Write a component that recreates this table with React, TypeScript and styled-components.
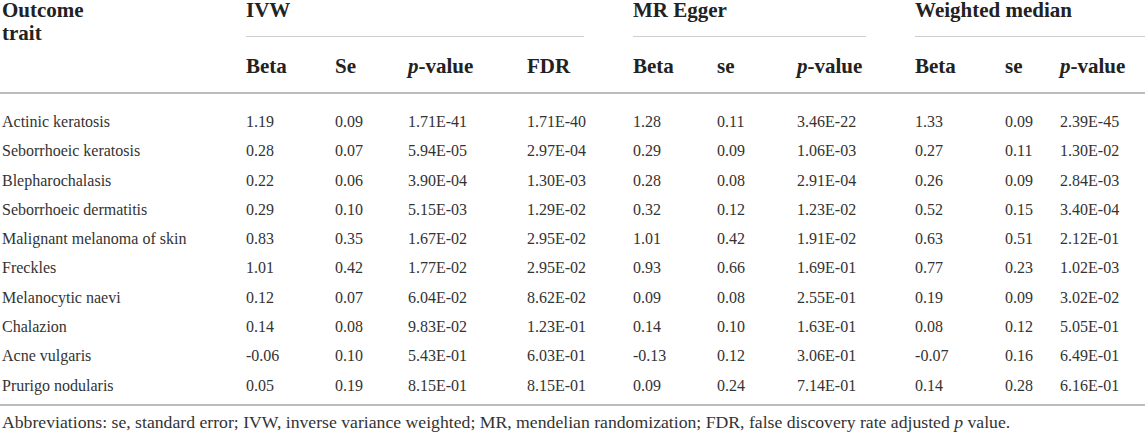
import React from "react";
import styled, { createGlobalStyle } from "styled-components";

const serif = `"Liberation Serif", "Times New Roman", serif`;

const GlobalStyle = createGlobalStyle`
  html, body {
    margin: 0;
    padding: 0;
    background: #fff;
  }
  body {
    font-family: ${serif};
    color: #333;
  }
`;

interface Row {
  trait: string;
  values: string[];
}

const rows: Row[] = [
  { trait: "Actinic keratosis", values: ["1.19", "0.09", "1.71E-41", "1.71E-40", "1.28", "0.11", "3.46E-22", "1.33", "0.09", "2.39E-45"] },
  { trait: "Seborrhoeic keratosis", values: ["0.28", "0.07", "5.94E-05", "2.97E-04", "0.29", "0.09", "1.06E-03", "0.27", "0.11", "1.30E-02"] },
  { trait: "Blepharochalasis", values: ["0.22", "0.06", "3.90E-04", "1.30E-03", "0.28", "0.08", "2.91E-04", "0.26", "0.09", "2.84E-03"] },
  { trait: "Seborrhoeic dermatitis", values: ["0.29", "0.10", "5.15E-03", "1.29E-02", "0.32", "0.12", "1.23E-02", "0.52", "0.15", "3.40E-04"] },
  { trait: "Malignant melanoma of skin", values: ["0.83", "0.35", "1.67E-02", "2.95E-02", "1.01", "0.42", "1.91E-02", "0.63", "0.51", "2.12E-01"] },
  { trait: "Freckles", values: ["1.01", "0.42", "1.77E-02", "2.95E-02", "0.93", "0.66", "1.69E-01", "0.77", "0.23", "1.02E-03"] },
  { trait: "Melanocytic naevi", values: ["0.12", "0.07", "6.04E-02", "8.62E-02", "0.09", "0.08", "2.55E-01", "0.19", "0.09", "3.02E-02"] },
  { trait: "Chalazion", values: ["0.14", "0.08", "9.83E-02", "1.23E-01", "0.14", "0.10", "1.63E-01", "0.08", "0.12", "5.05E-01"] },
  { trait: "Acne vulgaris", values: ["-0.06", "0.10", "5.43E-01", "6.03E-01", "-0.13", "0.12", "3.06E-01", "-0.07", "0.16", "6.49E-01"] },
  { trait: "Prurigo nodularis", values: ["0.05", "0.19", "8.15E-01", "8.15E-01", "0.09", "0.24", "7.14E-01", "0.14", "0.28", "6.16E-01"] },
];

const colWidths = [244, 89, 73, 119, 106, 84, 80, 118, 90, 55, 87];

const Wrapper = styled.div`
  width: 1145px;
  font-family: ${serif};
`;

const Table = styled.table`
  width: 1145px;
  table-layout: fixed;
  border-collapse: separate;
  border-spacing: 0;
  font-family: ${serif};
`;

const HeadCell = styled.th<{ $rule?: boolean }>`
  padding: 0 0 0 2px;
  text-align: left;
  vertical-align: top;
  font-family: ${serif};
  font-weight: 700;
  font-size: 21px;
  line-height: 20px;
  color: #222;
  white-space: nowrap;
  border-bottom: ${({ $rule }) => ($rule ? "2px solid #bcbcbc" : "none")};
`;

const TraitLabel = styled.div`
  line-height: 23.4px;
  margin-top: -1px;
`;

const SubHead = styled(HeadCell)`
  padding-top: 19px;
  padding-bottom: 16px;
`;

const GroupTitle = styled.div<{ $last?: boolean }>`
  padding-bottom: 16px;
  margin-right: ${({ $last }) => ($last ? "0" : "47px")};
  border-bottom: 1px solid #cfcfcf;
`;

const BodyRow = styled.tr<{ $first?: boolean; $last?: boolean }>`
  & > td {
    padding-top: ${({ $first }) => ($first ? "13px" : "0")};
    padding-bottom: ${({ $last }) => ($last ? "4px" : "0")};
    border-bottom: ${({ $last }) => ($last ? "2px solid #bcbcbc" : "none")};
  }
`;

const Cell = styled.td`
  padding-left: 2px;
  font-family: ${serif};
  font-size: 16px;
  line-height: 29.3px;
  color: #333;
  white-space: nowrap;
  vertical-align: top;
`;

const Footnote = styled.p`
  margin: 0;
  padding: 6px 0 0 2px;
  font-family: ${serif};
  font-size: 17.7px;
  line-height: 20px;
  color: #333;
  white-space: nowrap;
`;

const PValue = () => (
  <>
    <i>p</i>-value
  </>
);

export default function App() {
  return (
    <Wrapper>
      <GlobalStyle />
      <Table>
        <colgroup>
          {colWidths.map((w, i) => (
            <col key={i} style={{ width: w }} />
          ))}
        </colgroup>
        <thead>
          <tr>
            <HeadCell rowSpan={2} $rule>
              <TraitLabel>
                Outcome
                <br />
                trait
              </TraitLabel>
            </HeadCell>
            <HeadCell colSpan={4}>
              <GroupTitle>IVW</GroupTitle>
            </HeadCell>
            <HeadCell colSpan={3}>
              <GroupTitle>MR Egger</GroupTitle>
            </HeadCell>
            <HeadCell colSpan={3}>
              <GroupTitle $last>Weighted median</GroupTitle>
            </HeadCell>
          </tr>
          <tr>
            <SubHead $rule>Beta</SubHead>
            <SubHead $rule>Se</SubHead>
            <SubHead $rule><PValue /></SubHead>
            <SubHead $rule>FDR</SubHead>
            <SubHead $rule>Beta</SubHead>
            <SubHead $rule>se</SubHead>
            <SubHead $rule><PValue /></SubHead>
            <SubHead $rule>Beta</SubHead>
            <SubHead $rule>se</SubHead>
            <SubHead $rule><PValue /></SubHead>
          </tr>
        </thead>
        <tbody>
          {rows.map((row, i) => (
            <BodyRow key={row.trait} $first={i === 0} $last={i === rows.length - 1}>
              <Cell>{row.trait}</Cell>
              {row.values.map((v, j) => (
                <Cell key={j}>{v}</Cell>
              ))}
            </BodyRow>
          ))}
        </tbody>
      </Table>
      <Footnote>
        Abbreviations: se, standard error; IVW, inverse variance weighted; MR, mendelian randomization; FDR, false
        discovery rate adjusted <i>p</i> value.
      </Footnote>
    </Wrapper>
  );
}
